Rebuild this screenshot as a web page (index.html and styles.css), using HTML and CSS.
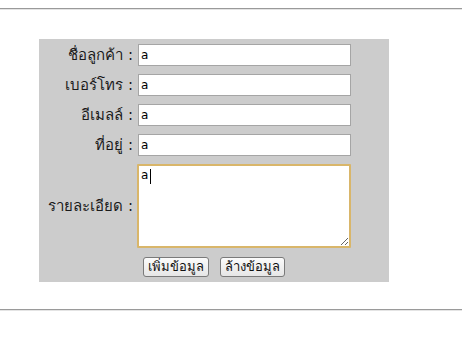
FILE: index.html
```html
<!DOCTYPE html>
<html lang="th">
<head>
<meta charset="utf-8">
<link rel="stylesheet" href="styles.css">
</head>
<body>
<hr class="rule">
<form class="box">
  <label class="lbl" for="n">ชื่อลูกค้า :</label>
  <input class="field" id="n" type="text" value="a">
  <label class="lbl" for="p">เบอร์โทร :</label>
  <input class="field" id="p" type="text" value="a">
  <label class="lbl" for="e">อีเมลล์ :</label>
  <input class="field" id="e" type="text" value="a">
  <label class="lbl" for="a">ที่อยู่ :</label>
  <input class="field" id="a" type="text" value="a">
  <label class="lbl" for="d">รายละเอียด :</label>
  <div class="tawrap">
    <textarea class="area" id="d">a</textarea>
    <span class="caret"></span>
  </div>
  <div class="btns">
    <button class="btn" type="button">เพิ่มข้อมูล</button>
    <button class="btn" type="button">ล้างข้อมูล</button>
  </div>
</form>
<hr class="rule bottom">
</body>
</html>
```
FILE: styles.css
```css
html, body {
  margin: 0;
  padding: 0;
  background: #fff;
}
body {
  padding-top: 8px;
  font-family: Tahoma, "DejaVu Sans", "Noto Sans", sans-serif;
}
.rule {
  margin: 0;
  height: 0;
  border: 0;
  border-top: 1px solid #9a9a9a;
  border-bottom: 1px solid #e4e4e4;
}
.box {
  margin: 29px 0 0 39px;
  width: 350px;
  box-sizing: border-box;
  background: #cccccc;
  padding: 5px 38px 6px 0;
  display: grid;
  grid-template-columns: 94px 213px;
  grid-template-rows: 22px 22px 22px 22px 84px 20px;
  column-gap: 5px;
  row-gap: 8px;
  align-items: center;
}
.lbl {
  text-align: right;
  font-size: 15px;
  line-height: 22px;
  height: 22px;
  color: #1a1a1a;
  white-space: nowrap;
}
.field {
  box-sizing: border-box;
  width: 213px;
  height: 22px;
  margin: 0;
  border: 1px solid #a5a5a5;
  background: #fff;
  padding: 1px 2px;
  font-family: "DejaVu Sans", sans-serif;
  font-size: 12px;
  color: #000;
  outline: none;
}
.tawrap {
  position: relative;
  height: 84px;
}
.area {
  box-sizing: border-box;
  width: 214px;
  height: 84px;
  margin: 0 0 0 -1px;
  border: 2px solid #d9b66a;
  border-radius: 1px;
  padding: 2px 2px;
  font-family: "DejaVu Sans", sans-serif;
  font-size: 12px;
  color: #000;
  outline: none;
  resize: both;
  display: block;
}
.caret {
  position: absolute;
  left: 12px;
  top: 5px;
  width: 1px;
  height: 15px;
  background: #000;
}
.btns {
  grid-column: 2;
  display: flex;
  gap: 11px;
  margin: 1px 0 0 5px;
  height: 20px;
}
.btn {
  height: 20px;
  margin: 0;
  padding: 0 4px;
  border: 1px solid #7a7a7a;
  border-radius: 3px;
  background: linear-gradient(#fbfbfb, #e6e6e6);
  font-family: Tahoma, "DejaVu Sans", sans-serif;
  font-size: 13px;
  line-height: 18px;
  color: #111;
}
.bottom {
  margin-top: 27px;
}
```
